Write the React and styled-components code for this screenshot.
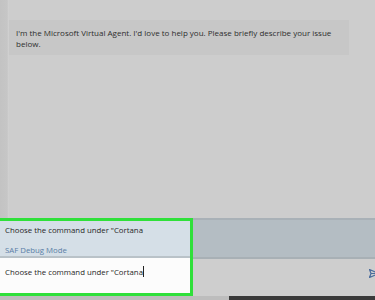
import React from "react";
import styled, { createGlobalStyle } from "styled-components";

const Global = createGlobalStyle`
  html, body { margin: 0; padding: 0; }
  body { background: #cdcdcd; font-family: "Open Sans", "Noto Sans", sans-serif; }
`;

const Page = styled.div`
  width: 375px;
  height: 300px;
  display: flex;
  flex-direction: column;
  background: #cdcdcd;
  overflow: hidden;
`;

const Conversation = styled.div`
  flex: 1;
  display: flex;
  min-height: 0;
`;

const Strip = styled.div`
  width: 9px;
  background: linear-gradient(to right, #c3c3c3 0%, #c6c6c6 80%, #d3d3d3 100%);
`;

const Messages = styled.div`
  flex: 1;
  padding-top: 20px;
  padding-right: 26px;
`;

const Bubble = styled.div`
  background: #c7c7c7;
  padding: 8px 14px 6px 7px;
  height: 21px;
  font-size: 8px;
  line-height: 10.5px;
  color: #2e2e2e;
`;

const Composer = styled.div`
  display: flex;
  height: 78px;
`;

const Highlight = styled.div`
  width: 193px;
  box-sizing: border-box;
  border: 3px solid #2fe03a;
  border-left: none;
  display: flex;
  flex-direction: column;
`;

const Suggestions = styled.div`
  background: #d5dfe7;
  height: 35px;
  border-bottom: 2px solid #b9c2c8;
  padding: 3px 0 0 5px;
  display: flex;
  flex-direction: column;
  gap: 8px;
  box-sizing: border-box;
  height: 37px;
`;

const SuggestionText = styled.div`
  font-size: 7.8px;
  line-height: 12px;
  color: ${(p) => (p.$link ? "#5a7ea6" : "#262626")};
`;

const InputBox = styled.div`
  flex: 1;
  background: #fcfcfc;
  padding: 8px 0 0 5px;
  font-size: 7.8px;
  line-height: 12px;
  color: #262626;
  display: flex;
  align-items: flex-start;
`;

const Caret = styled.span`
  display: inline-block;
  width: 1px;
  height: 11px;
  background: #222;
  margin-left: 0.5px;
`;

const RightCol = styled.div`
  flex: 1;
  display: flex;
  flex-direction: column;
`;

const Bar = styled.div`
  height: 37px;
  background: #b4bdc3;
  border-top: 2px solid #a9b1b7;
  border-bottom: 2px solid #a8b0b5;
`;

const SendArea = styled.div`
  flex: 1;
  background: #cecece;
  display: flex;
  justify-content: flex-end;
  align-items: flex-start;
  padding-top: 10px;
`;

const SendIcon = styled.svg`
  width: 10px;
  height: 9px;
  margin-right: -4px;
`;

const Bottom = styled.div`
  height: 4px;
  display: flex;
`;

const BottomLight = styled.div`
  width: 229px;
  background: #bdbdbd;
`;

const BottomDark = styled.div`
  flex: 1;
  background: #3a3a3a;
`;

export default function App() {
  return (
    <Page>
      <Global />
      <Conversation>
        <Strip />
        <Messages>
          <Bubble>
            I'm the Microsoft Virtual Agent. I'd love to help you. Please briefly describe your issue below.
          </Bubble>
        </Messages>
      </Conversation>
      <Composer>
        <Highlight>
          <Suggestions>
            <SuggestionText>Choose the command under "Cortana</SuggestionText>
            <SuggestionText $link>SAF Debug Mode</SuggestionText>
          </Suggestions>
          <InputBox>
            Choose the command under "Cortana
            <Caret />
          </InputBox>
        </Highlight>
        <RightCol>
          <Bar />
          <SendArea>
            <SendIcon viewBox="0 0 10 9">
              <path d="M0.5 0.5 L9.5 4.5 L0.5 8.5 L2 4.5 Z" fill="none" stroke="#4b6c9c" strokeWidth="1.2" strokeLinejoin="round" />
              <path d="M2 4.5 H7" stroke="#4b6c9c" strokeWidth="1" />
            </SendIcon>
          </SendArea>
        </RightCol>
      </Composer>
      <Bottom>
        <BottomLight />
        <BottomDark />
      </Bottom>
    </Page>
  );
}
